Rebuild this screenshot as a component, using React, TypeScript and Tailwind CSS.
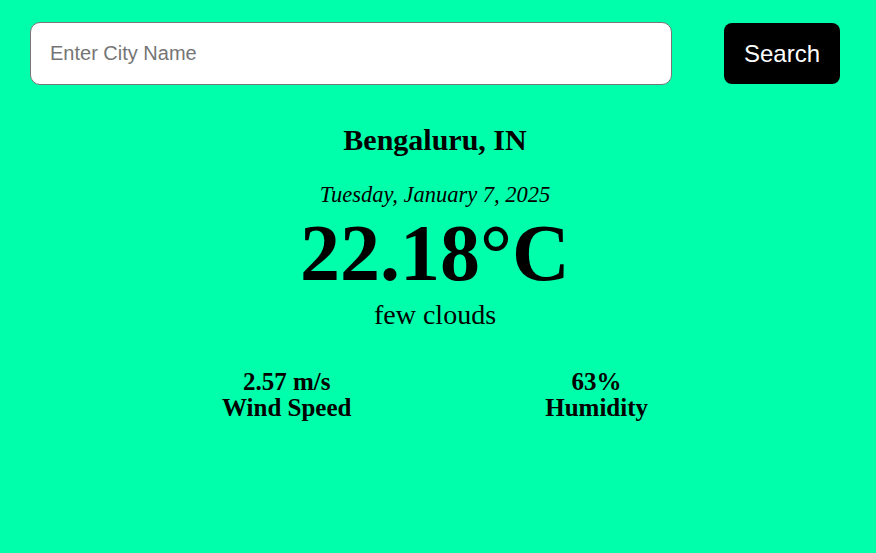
export default function App() {
  return (
    <div className="min-h-screen w-full bg-[#00ffaa] font-['Liberation_Serif',serif] text-black">
      <div className="px-[30px] pt-[22px] w-[876px]">
        <div className="flex items-center gap-[52px] pr-[6px]">
          <input
            type="text"
            placeholder="Enter City Name"
            className="h-[63px] flex-1 rounded-[10px] border border-[#767676] bg-white px-[19px] font-['Liberation_Sans',sans-serif] text-[20px] text-black placeholder:text-[#757575] outline-none"
          />
          <button className="h-[61px] w-[116px] rounded-[8px] bg-black font-['Liberation_Sans',sans-serif] text-[24px] text-white">
            Search
          </button>
        </div>
        <div className="flex flex-col items-center pr-[6px]">
          <h1 className="mt-[37px] text-[30px] font-bold leading-[36px]">Bengaluru, IN</h1>
          <p className="mt-[23px] text-[22.5px] italic leading-[28px]">Tuesday, January 7, 2025</p>
          <p className="text-[80px] font-bold leading-[88px]">22.18°C</p>
          <p className="mt-[1px] text-[28px] leading-[34px]">few clouds</p>
          <div className="mt-[37px] flex w-[426px] justify-between text-[25px] font-bold leading-[26px]">
            <div className="text-center">
              <p>2.57 m/s</p>
              <p>Wind Speed</p>
            </div>
            <div className="text-center">
              <p>63%</p>
              <p>Humidity</p>
            </div>
          </div>
        </div>
      </div>
    </div>
  );
}
